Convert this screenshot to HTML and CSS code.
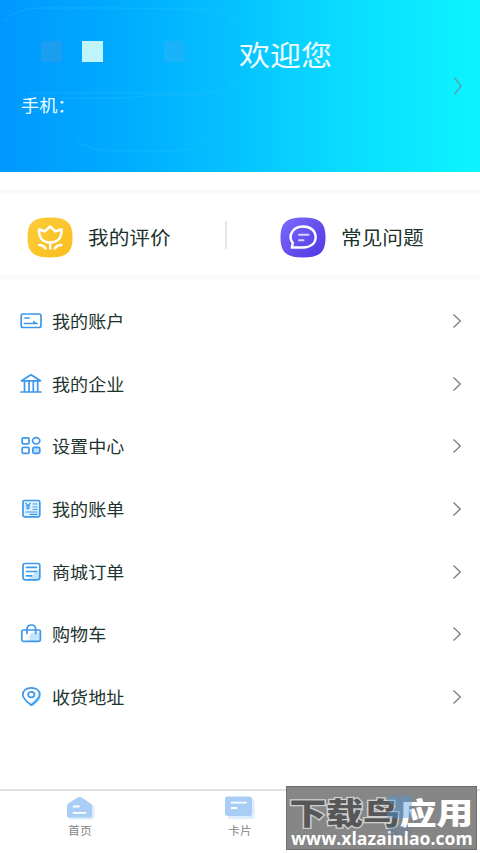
FILE: index.html
```html
<!DOCTYPE html>
<html lang="zh-CN">
<head>
<meta charset="utf-8">
<title>我的</title>
<link rel="stylesheet" href="styles.css">
</head>
<body>
<div class="app">
  <header class="hero">
    <svg class="hero-trace" width="240" height="171" viewBox="0 0 240 171">
      <path d="M3 22Q14 9 40 8H120Q150 9 203 9Q235 14 240 26M28 93H203Q226 93 235 80M60 98H120Q140 97 150 95H203M78 143Q95 150 110 151H175Q195 151 208 140"/>
    </svg>
    <div class="hero-top">
      <span class="block dim"></span><span class="block light"></span><span class="block faint"></span>
      <h1 class="welcome">欢迎您</h1>
    </div>
    <p class="phone">手机：</p>
    <svg class="hero-arrow" width="10" height="20" viewBox="0 0 10 20"><path d="M1.2 1.5L8 10L1.2 18.5"/></svg>
  </header>

  <section class="tiles">
    <a class="tile">
      <svg class="tile-icon" width="46" height="41" viewBox="0 0 46 41">
        <defs><linearGradient id="gold" x1="0" y1="0" x2="1" y2="1"><stop offset="0" stop-color="#fccc3c"/><stop offset="1" stop-color="#fbbe1c"/></linearGradient></defs>
        <path fill="url(#gold)" d="M23 .5C39 .5 45.5 5 45.5 20.500S39 40.500 23 40.500.5 36 .5 20.500 7 .5 23 .5Z"/>
        <g class="mark"><path d="M12 12.500Q15.500 13 17.500 14.500L23.200 9.500L28.800 14.500Q31 13 34.500 12.500C34.800 20 31.500 25.500 23.200 25.500S11.700 20 12 12.500ZM23.200 25.500V31.500M12 28Q16.500 28 18.500 31.500M34.300 28Q29.800 28 27.800 31.500"/></g>
      </svg>
      <span class="tile-text">我的评价</span>
    </a>
    <i class="divider"></i>
    <a class="tile second">
      <svg class="tile-icon" width="46" height="41" viewBox="0 0 46 41">
        <defs><linearGradient id="violet" x1="0" y1="0" x2="1" y2="1"><stop offset="0" stop-color="#7d6cfa"/><stop offset="1" stop-color="#5035e4"/></linearGradient></defs>
        <path fill="url(#violet)" d="M23 .5C39 .5 45.500 5 45.500 20.500S39 40.500 23 40.500.5 36 .5 20.500 7 .5 23 .5Z"/>
        <g class="mark"><path d="M11.800 30.500L12.800 26C7.500 19 12.500 9.500 23.200 9.500C30.500 9.500 35.600 14 35.600 20.200S30.500 30.500 23.200 30.500Z"/><path class="soft" d="M19 17.700H28.500M19 23.200H23.500"/></g>
      </svg>
      <span class="tile-text">常见问题</span>
    </a>
  </section>

  <nav class="list">
    <a class="row"><svg class="icon" width="22" height="22" viewBox="0 0 22 22"><rect x="1.200" y="4" width="19.800" height="13.500" rx="2"/><path d="M5 8H9M4.500 13.500H17"/><path class="solid" d="M13 10.500L17.500 13.500H13Z"/></svg><span class="label">我的账户</span><svg class="arrow" width="10" height="16" viewBox="0 0 10 16"><path d="M1.500 1.500L8.300 8L1.500 14.500"/></svg></a>
    <a class="row"><svg class="icon" width="22" height="22" viewBox="0 0 22 22"><path d="M1.500 7.800L11 1.800L20.500 7.800ZM4.500 8.500V18.500M9 8.500V18.500M13.300 8.500V18.500M17.700 8.500V18.500M1 19H21"/></svg><span class="label">我的企业</span><svg class="arrow" width="10" height="16" viewBox="0 0 10 16"><path d="M1.500 1.500L8.300 8L1.500 14.500"/></svg></a>
    <a class="row"><svg class="icon" width="22" height="22" viewBox="0 0 22 22"><rect x="2.200" y="2.800" width="6.800" height="6" rx="1"/><ellipse cx="16.200" cy="5.800" rx="3.600" ry="3.200"/><rect x="2.200" y="12.300" width="6.800" height="6" rx="1"/><rect class="tint" x="12.800" y="12.300" width="7" height="6" rx="1.500"/></svg><span class="label">设置中心</span><svg class="arrow" width="10" height="16" viewBox="0 0 10 16"><path d="M1.500 1.500L8.300 8L1.500 14.500"/></svg></a>
    <a class="row"><svg class="icon" width="22" height="22" viewBox="0 0 22 22"><rect class="pale" x="3" y="2.500" width="16.800" height="16.300" rx="1.500"/><path class="thin" d="M5.500 5L8 7.700L10.500 5M8 7.700V11.800M5.700 8H10.300M5.700 10H10.300M12.500 6H17.500M12.500 9H17.500M12.500 11.500H17.500M5.500 14H17.500M9.500 16.300H17.500"/></svg><span class="label">我的账单</span><svg class="arrow" width="10" height="16" viewBox="0 0 10 16"><path d="M1.500 1.500L8.300 8L1.500 14.500"/></svg></a>
    <a class="row"><svg class="icon" width="22" height="22" viewBox="0 0 22 22"><path class="wash" d="M20 7V19H7Z"/><rect x="3" y="2.500" width="16.800" height="16.300" rx="2.200"/><path d="M6.500 6.300H16.500M6.500 10.500H16.500M6.500 14.800H11.500"/></svg><span class="label">商城订单</span><svg class="arrow" width="10" height="16" viewBox="0 0 10 16"><path d="M1.500 1.500L8.300 8L1.500 14.500"/></svg></a>
    <a class="row"><svg class="icon" width="22" height="22" viewBox="0 0 22 22"><path class="wash" d="M9.500 18V13.500Q10 9.500 15 9.500H20V18Z"/><rect x="1.800" y="7" width="18.600" height="11.300" rx="1.500"/><path d="M7 10.500V6.300Q7 2 11.300 2T15.700 6.300V10.500"/></svg><span class="label">购物车</span><svg class="arrow" width="10" height="16" viewBox="0 0 10 16"><path d="M1.500 1.500L8.300 8L1.500 14.500"/></svg></a>
    <a class="row"><svg class="icon" width="22" height="22" viewBox="0 0 22 22"><path class="wash" d="M18.500 6L20.800 10C20.500 15 17 17.500 12.500 20L9 18C14 15 18 11 18.500 6Z"/><path d="M11.300 19.200C5.800 15 2.800 12 2.800 8.800C2.800 4.500 6.400 1.800 11.300 1.800S19.800 4.500 19.800 8.800C19.800 12 16.800 15 11.300 19.200Z"/><ellipse cx="11.300" cy="8.600" rx="3.200" ry="2.800"/></svg><span class="label">收货地址</span><svg class="arrow" width="10" height="16" viewBox="0 0 10 16"><path d="M1.500 1.500L8.300 8L1.500 14.500"/></svg></a>
  </nav>

  <aside class="stamp">
    <div class="stamp-name"><b class="dark">下载鸟</b><b>应用</b></div>
    <div class="stamp-url"><span>www.xlazainlao.com</span></div>
  </aside>
  <footer class="tabs">
    <a class="tab"><svg width="30" height="24" viewBox="0 0 30 24"><path class="back" d="M4 9L17 2L29.500 10V20Q29.500 23.500 26 23.500H5Q3 23 2 20Z"/><path class="front" d="M2 10Q2 8 4 7L12.500 1.500Q14.500 .4 16.500 1.500L25 7Q27 8 27 10V19Q27 21.500 24.500 21.500H4.500Q2 21.500 2 19Z"/><path class="line" d="M8.500 10.500H14M8.500 16.800H20.500"/></svg><span class="tab-label">首页</span></a>
    <a class="tab"><svg width="30" height="24" viewBox="0 0 30 24"><rect class="back" x="3" y="3" width="26.500" height="20" rx="2"/><rect class="front" x="0" y="0.500" width="27" height="19.500" rx="2.500"/><path class="line" d="M6.500 6.600H21M6.500 12H11.500"/></svg><span class="tab-label">卡片</span></a>
    <a class="tab current"><svg width="30" height="24" viewBox="0 0 30 24"><path d="M2 0H27V22H2V18Q8 15 11 10Q3 8 2 0Z"/></svg><span class="tab-label">我的</span></a>
  </footer>
</div>
</body>
</html>
```
FILE: styles.css
```css
* { box-sizing: border-box; }
body { margin: 0; background: #fff; font-family: "Noto Sans CJK SC", sans-serif; color: #1c332d; }
.app { position: relative; width: 480px; height: 853px; display: flex; flex-direction: column; overflow: hidden; }
svg { flex: none; display: block; }

.hero { position: relative; height: 171.500px; flex: none; color: #effcff; background: linear-gradient(90deg, #0098ff 0%, #00a9ff 22%, #05c1ff 48%, #0adcff 72%, #0cf5ff 100%); }
.hero-trace { position: absolute; left: 0; top: 0; fill: none; stroke: #35c8ff; stroke-opacity: .3; }
.hero-top { display: flex; align-items: flex-start; padding: 41px 0 0 41px; height: 92px; }
.block { width: 20.500px; height: 20.500px; flex: none; }
.dim { background: #1b9df0; }
.light { background: #c0f4fc; margin-left: 20.500px; }
.faint { background: #18b3fa; margin-left: 61.500px; }
.welcome { margin: -7px 0 0 54.500px; font-size: 28.200px; line-height: 40px; font-weight: 400; transform: scaleX(1.1); transform-origin: 0 50%; white-space: nowrap; }
.phone { margin: 1px 0 0 21px; font-size: 16.500px; line-height: 24px; transform: scaleX(1.1); transform-origin: 0 50%; width: 80px; }
.hero-arrow { position: absolute; left: 452.500px; top: 76px; fill: none; stroke: #55a5ae; stroke-width: 1.500; }

.tiles { flex: none; margin-top: 17.500px; height: 90px; border-top: 5px solid #fafafa; border-bottom: 5px solid #fafafa; display: flex; align-items: center; padding: 6px 0 0 26.500px; }
.tile { display: flex; align-items: center; width: 198px; }
.tile-text { margin-left: 15.500px; font-size: 18.800px; line-height: 28px; transform: scaleX(1.1); transform-origin: 0 50%; white-space: nowrap; }
.divider { width: 2px; height: 28px; margin: -5px 53px 0 0; background: #e8e8e8; }
.mark { fill: none; stroke: #fff; stroke-width: 2.400; stroke-linejoin: round; stroke-linecap: round; }
.soft { stroke: #d9d4ff; stroke-width: 2; }

.list { flex: none; margin-top: 11px; }
.row { display: flex; align-items: center; height: 62.600px; padding: 0 18px 0 20px; }
.label { flex: 1; margin-left: 9.500px; font-size: 16.500px; line-height: 24px; transform: scaleX(1.095); transform-origin: 0 50%; }
.icon { fill: none; stroke: #3d97ea; stroke-width: 1.700; stroke-linejoin: round; stroke-linecap: round; }
.solid { fill: #3d97ea; stroke: none; }
.tint { fill: #b9e0ff; }
.pale { fill: #e0f2ff; }
.thin { stroke-width: 1.200; stroke-linecap: butt; }
.wash { fill: #c2e4ff; stroke: none; }
.arrow { fill: none; stroke: #71807d; stroke-width: 1.300; }

.tabs { margin-top: auto; height: 64px; flex: none; display: flex; border-top: 2px solid #e1e1e1; }
.tab { width: 160px; display: flex; flex-direction: column; align-items: center; padding-top: 5px; }
.tab-label { font-size: 11px; line-height: 16px; margin-top: 2px; color: #858585; transform: scaleX(1.08); }
.back { fill: #deedfb; }
.front { fill: #a9cdf4; }
.line { fill: none; stroke: #fff; stroke-width: 1.800; stroke-linecap: round; }
.current { position: relative; z-index: 2; fill: #4b9be6; opacity: .4; }
.current .tab-label { color: #2676c4; }

.stamp { position: absolute; z-index: 1; left: 286px; top: 785.500px; width: 191px; height: 64px; background: #868686; border: 1px solid #6e6e6e; color: #fff; white-space: nowrap; }
.stamp-name { height: 38px; padding: 6px 0 0 2px; font-size: 30px; line-height: 36px; transform: scaleX(1.225); transform-origin: 0 0; }
.stamp-name b { font-weight: 900; }
.stamp-name .dark { color: #575757; -webkit-text-stroke: 2.500px #cfcfcf; paint-order: stroke fill; }
.stamp-url { padding-left: 4px; font: bold 18px/22px "Open Sans", sans-serif; margin-top: 2px; }
.stamp-url span { display: inline-block; transform: scaleX(.978); transform-origin: 0 50%; }
```
